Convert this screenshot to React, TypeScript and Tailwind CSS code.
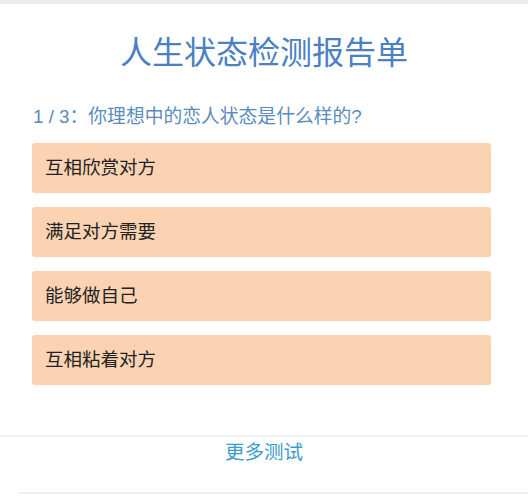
import React from 'react';

const options = ['互相欣赏对方', '满足对方需要', '能够做自己', '互相粘着对方'];

const App: React.FC = () => {
  return (
    <div
      className="w-[528px] h-[500px] overflow-hidden bg-white"
      style={{ fontFamily: '"Liberation Sans", "Noto Sans CJK SC", sans-serif' }}
    >
      <div className="h-[4px] bg-[#ececec]" />

      <h1 className="mt-[31px] text-center text-[32px] leading-[36px] font-normal text-[#4b80c2]">
        人生状态检测报告单
      </h1>

      <p className="mt-[34px] ml-[33px] text-[18.8px] leading-[24px] text-[#5a8bbd]">
        1 / 3：你理想中的恋人状态是什么样的?
      </p>

      <div className="mt-[14px] ml-[32px] mr-[37px] flex flex-col gap-[14px]">
        {options.map((opt) => (
          <div
            key={opt}
            className="h-[50px] flex items-center pl-[13px] rounded-[3px] bg-[#fbd3b3] text-[18.5px] text-[#222222] shadow-[0_1px_1px_rgba(0,0,0,0.04)]"
          >
            {opt}
          </div>
        ))}
      </div>

      <div className="mt-[50px] border-t-2 border-[#f0f0f0]">
        <div className="h-[55px] pt-[1px] text-center text-[19.5px] leading-[28px] text-[#3b9bcb]">
          更多测试
        </div>
        <div className="ml-[18px] border-t-2 border-[#f0f0f0]" />
      </div>
    </div>
  );
};

export default App;
